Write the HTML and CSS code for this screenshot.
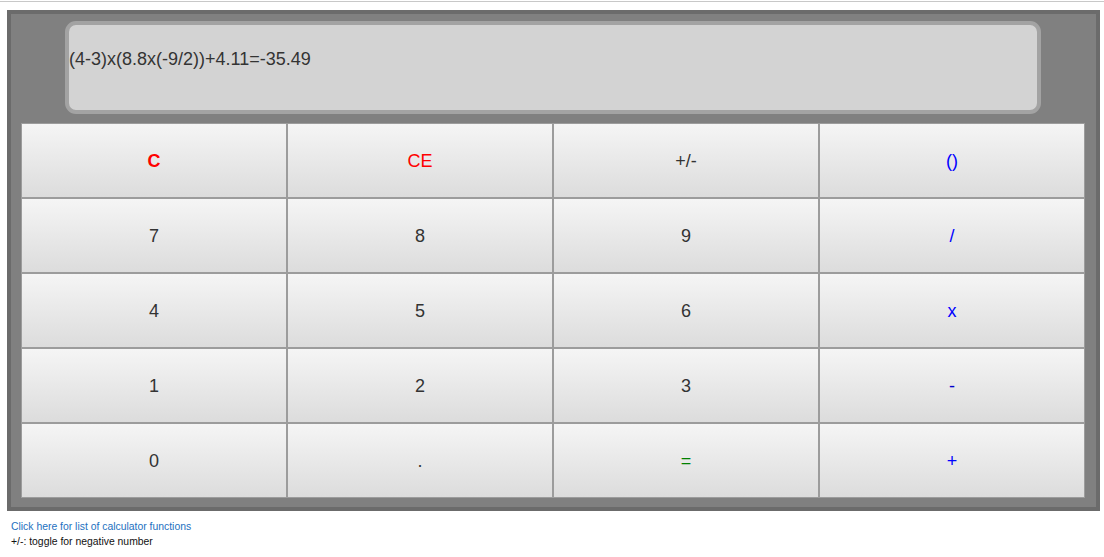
FILE: index.html
```html
<!DOCTYPE html>
<html>
<head>
<meta charset="utf-8">
<title>Calculator</title>
<link rel="stylesheet" href="styles.css">
</head>
<body>
<div class="page">
  <div class="calc">
    <div class="display">(4-3)x(8.8x(-9/2))+4.11=-35.49</div>
    <div class="keys">
      <div class="key red bold">C</div>
      <div class="key red">CE</div>
      <div class="key">+/-</div>
      <div class="key blue">()</div>
      <div class="key">7</div>
      <div class="key">8</div>
      <div class="key">9</div>
      <div class="key blue">/</div>
      <div class="key">4</div>
      <div class="key">5</div>
      <div class="key">6</div>
      <div class="key blue">x</div>
      <div class="key">1</div>
      <div class="key">2</div>
      <div class="key">3</div>
      <div class="key navy">-</div>
      <div class="key">0</div>
      <div class="key">.</div>
      <div class="key green">=</div>
      <div class="key blue">+</div>
    </div>
  </div>
  <div class="notes">
    <a class="link" href="#">Click here for list of calculator functions</a>
    <div class="note">+/-: toggle for negative number</div>
  </div>
</div>
</body>
</html>
```
FILE: styles.css
```css
html, body {
  margin: 0;
  padding: 0;
  background: #ffffff;
}
body {
  font-family: "Liberation Sans", Arial, sans-serif;
}
.page {
  margin-top: 1px;
  border-top: 1px solid #c8c8c8;
  padding-top: 8px;
}
.calc {
  margin: 0 4px 0 7px;
  border: 4px solid #6b6b6b;
  background: #808080;
  padding: 7px 11px 9px 10px;
}
.display {
  width: 968px;
  height: 61px;
  margin: 0 auto;
  border: 4px solid #a3a3a3;
  border-radius: 11px;
  background: #d3d3d3;
  padding-top: 24px;
  font-size: 18px;
  line-height: 21px;
  color: #333333;
  white-space: nowrap;
}
.keys {
  margin-top: 9px;
  display: grid;
  grid-template-columns: repeat(4, 266px);
  grid-auto-rows: 75px;
}
.key {
  box-sizing: border-box;
  border: 1px solid #9c9c9c;
  background: linear-gradient(to bottom, #f5f5f5, #dcdcdc);
  display: flex;
  align-items: center;
  justify-content: center;
  padding-top: 2px;
  font-size: 18px;
  color: #333333;
}
.red { color: #ff0000; }
.bold { font-weight: bold; }
.blue { color: #0000ff; }
.navy { color: #0000cc; }
.green { color: #008000; }
.notes {
  margin: 8px 0 0 11px;
  font-size: 10.4px;
  line-height: 15px;
}
.link {
  display: block;
  color: #2370c0;
  text-decoration: none;
}
.note {
  color: #111111;
}
```
